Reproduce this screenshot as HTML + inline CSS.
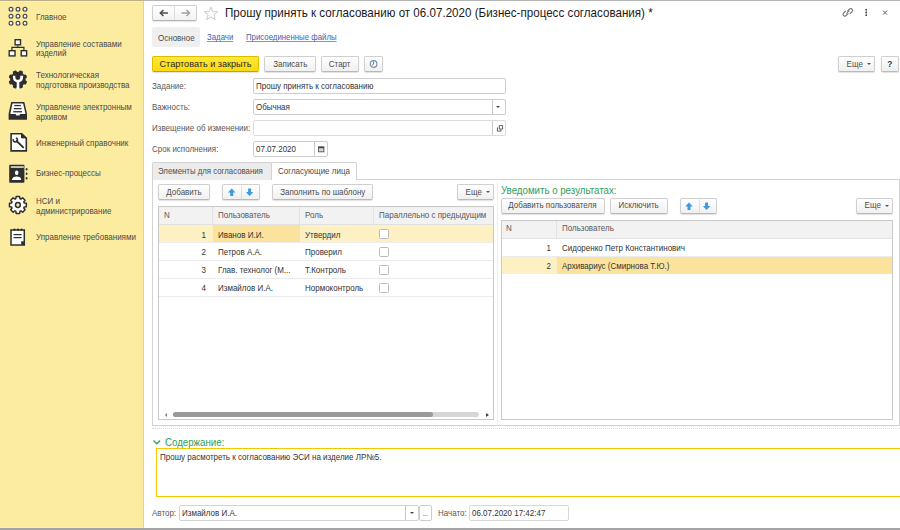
<!DOCTYPE html>
<html><head><meta charset="utf-8">
<style>
*{box-sizing:border-box;margin:0;padding:0}
html,body{width:900px;height:530px;overflow:hidden;background:#fff;font-family:"Liberation Sans",sans-serif;color:#4d4d4d}
.a{position:absolute}
.t{position:absolute;font-size:8.6px;line-height:10px;white-space:nowrap;transform:scaleX(.93);transform-origin:0 0}
#side{position:absolute;left:0;top:0;width:144px;height:530px;background:#fbeca0;border-right:1px solid #e6d47e}
#topline{position:absolute;left:0;top:0;width:900px;height:1px;background:#b4b4b4}
#botline{position:absolute;left:0;top:528px;width:900px;height:2px;background:#a4a3a6}
.st{color:#4a4a4a}
.btn{position:absolute;height:16px;border:1px solid #cfcfcf;border-bottom-color:#b9b9b9;border-radius:2px;background:linear-gradient(#ffffff,#f0f0f0);box-shadow:0 1px 1px rgba(0,0,0,0.12);font-size:8.6px;line-height:14px;text-align:center;color:#4d4d4d;white-space:nowrap}
.inp{position:absolute;height:16px;border:1px solid #cdcdcd;border-radius:2px;background:#fff;font-size:8.6px;line-height:14px;padding-left:2px;color:#333;white-space:nowrap}
.lbl{position:absolute;font-size:8.6px;line-height:10px;color:#595959;white-space:nowrap;transform:scaleX(.93);transform-origin:0 0}
.th{position:absolute;font-size:8.6px;line-height:10px;color:#595959;white-space:nowrap;transform:scaleX(.93);transform-origin:0 0}
.td{position:absolute;font-size:8.6px;line-height:10px;color:#333;white-space:nowrap;transform:scaleX(.93);transform-origin:0 0}
.tr{transform-origin:100% 0}
.sx{display:inline-block;transform:scaleX(.93)}
.green{position:absolute;font-size:10.6px;line-height:12px;color:#2c9e5c;white-space:nowrap;transform:scaleX(.915);transform-origin:0 0}
.link{position:absolute;font-size:8.6px;line-height:10px;color:#4563b0;text-decoration:underline;text-decoration-color:#7f97cf;text-underline-offset:1px;white-space:nowrap;transform:scaleX(.91);transform-origin:0 0}
</style></head><body>
<div id="side"></div>
<div id="topline"></div><div class="a" style="left:0;top:0;width:143px;height:1px;background:#bcae86"></div><div class="a" style="left:0;top:1px;width:143px;height:1px;background:#fdf1ae"></div>

<!-- sidebar icons -->
<svg class="a" style="left:0;top:0" width="143" height="260" viewBox="0 0 143 260">
 <g fill="#fff" stroke="#4a4a4a" stroke-width="1.2">
  <circle cx="11" cy="9.3" r="1.9"/><circle cx="18" cy="9.3" r="1.9"/><circle cx="25" cy="9.3" r="1.9"/>
  <circle cx="11" cy="16.3" r="1.9"/><circle cx="18" cy="16.3" r="1.9"/><circle cx="25" cy="16.3" r="1.9"/>
  <circle cx="11" cy="23.3" r="1.9"/><circle cx="18" cy="23.3" r="1.9"/><circle cx="25" cy="23.3" r="1.9"/>
 </g>
 <!-- structure -->
 <g fill="#fff" stroke="#2e2e2e" stroke-width="1.4">
  <rect x="15.1" y="39.7" width="5.4" height="5.1"/>
  <rect x="9.2" y="50.7" width="5.8" height="5.2"/>
  <rect x="21.2" y="50.7" width="5.4" height="5.2"/>
  <path d="M17.8 45.5V47.3M11.9 50V47.3H23.9V50" fill="none" stroke-width="1.2"/>
 </g>
 <!-- gear wrench -->
 <g transform="translate(17.9 79.5)" fill="#2e2e2e">
  <circle r="7.7"/>
  <g id="teeth" transform="rotate(22.5)">
   <rect x="-2" y="-9.3" width="4" height="4" rx="1.1"/>
   <rect x="-2" y="-9.3" width="4" height="4" rx="1.1" transform="rotate(45)"/>
   <rect x="-2" y="-9.3" width="4" height="4" rx="1.1" transform="rotate(90)"/>
   <rect x="-2" y="-9.3" width="4" height="4" rx="1.1" transform="rotate(135)"/>
   <rect x="-2" y="-9.3" width="4" height="4" rx="1.1" transform="rotate(180)"/>
   <rect x="-2" y="-9.3" width="4" height="4" rx="1.1" transform="rotate(225)"/>
   <rect x="-2" y="-9.3" width="4" height="4" rx="1.1" transform="rotate(270)"/>
   <rect x="-2" y="-9.3" width="4" height="4" rx="1.1" transform="rotate(315)"/>
  </g>
 </g>
 <path d="M12.9 75.8V77.2A5.1 5.1 0 0 0 16.7 82.13V89.2H19.3V82.13A5.1 5.1 0 0 0 23.1 77.2V75.8H20.3V77.4A2.5 2.5 0 0 1 15.3 77.4V75.8Z" fill="#fff"/>
 <!-- archive tray -->
 <path d="M11.2 102H24.3L27 113.8V119.7H8.6V113.8Z" fill="#2e2e2e"/>
 <path d="M12.5 103.4H23.1L25.5 113.9H10.3Z" fill="#fff"/>
 <rect x="14.3" y="104.9" width="6.6" height="1.3" fill="#2e2e2e"/>
 <rect x="13.8" y="108" width="7.8" height="1.3" fill="#2e2e2e"/>
 <rect x="13.2" y="111.1" width="8.8" height="1.3" fill="#2e2e2e"/>
 
 <rect x="15.9" y="113.6" width="3.9" height="1.8" fill="#fff"/>
 <!-- doc wrench -->
 <path d="M11.1 133.8H21.8L26.3 138.3V150.9H11.1Z" fill="#fff" stroke="#2e2e2e" stroke-width="1.6"/>
 <path d="M21.5 133.8V137.9H26.3Z" fill="#2e2e2e" stroke="#2e2e2e" stroke-width="1"/>
 <path d="M16.6 141L23.2 147.3" stroke="#2e2e2e" stroke-width="1.8" stroke-linecap="round"/>
 <path d="M13.4 139.1A2.1 2.1 0 1 0 16 137.9" fill="none" stroke="#2e2e2e" stroke-width="1.6"/>
 <!-- contact book -->
 <rect x="9.2" y="164.7" width="15.2" height="18" rx="0.8" fill="#2e2e2e"/>
 <rect x="10.8" y="166.2" width="13" height="1.7" fill="#d8d8d8"/>
 <ellipse cx="16.7" cy="172.7" rx="1.8" ry="2.3" fill="#fff"/>
 <path d="M11.9 180C12.3 177.4 14 176.6 16.7 176.6C19.4 176.6 21 177.4 21.3 180Z" fill="#fff"/>
 <ellipse cx="26.6" cy="169.3" rx="0.9" ry="1.3" fill="#2e2e2e"/>
 <ellipse cx="26.6" cy="173.7" rx="0.9" ry="1.3" fill="#2e2e2e"/>
 <ellipse cx="26.6" cy="178.2" rx="0.9" ry="1.3" fill="#2e2e2e"/>
 <!-- gear outline -->
 <g transform="translate(17.9 205)">
  <path fill="#fff" stroke="#2e2e2e" stroke-width="1.5" stroke-linejoin="round" d="M-2.08 -6.26L-1.71 -8.43L1.71 -8.43L2.08 -6.26L2.96 -5.90L4.75 -7.17L7.17 -4.75L5.90 -2.96L6.26 -2.08L8.43 -1.71L8.43 1.71L6.26 2.08L5.90 2.96L7.17 4.75L4.75 7.17L2.96 5.90L2.08 6.26L1.71 8.43L-1.71 8.43L-2.08 6.26L-2.96 5.90L-4.75 7.17L-7.17 4.75L-5.90 2.96L-6.26 2.08L-8.43 1.71L-8.43 -1.71L-6.26 -2.08L-5.90 -2.96L-7.17 -4.75L-4.75 -7.17L-2.96 -5.90Z"/>
  <circle r="2.4" fill="#fbeca0" stroke="#2e2e2e" stroke-width="1.5"/>
 </g>
 <!-- notepad -->
 <path d="M11 230.1H24.3V244.9H11Z" fill="#fff" stroke="#2e2e2e" stroke-width="1.5"/>
 <circle cx="14.4" cy="229.6" r="1.1" fill="#2e2e2e"/>
 <circle cx="18" cy="229.6" r="1.1" fill="#2e2e2e"/>
 <circle cx="21.6" cy="229.6" r="1.1" fill="#2e2e2e"/>
 <rect x="13.5" y="234" width="8.1" height="1.2" fill="#2e2e2e"/>
 <rect x="13.5" y="237" width="8.1" height="1.2" fill="#2e2e2e"/>
 <rect x="21.2" y="241.3" width="3.1" height="3.6" fill="#2e2e2e"/>
</svg>

<div class="t st" style="left:36px;top:12px">Главное</div>
<div class="t st" style="left:36px;top:40px;line-height:9px">Управление составами<br>изделий</div>
<div class="t st" style="left:36px;top:70px">Технологическая<br>подготовка производства</div>
<div class="t st" style="left:36px;top:101.7px">Управление электронным<br>архивом</div>
<div class="t st" style="left:36px;top:138px">Инженерный справочник</div>
<div class="t st" style="left:36px;top:168px">Бизнес-процессы</div>
<div class="t st" style="left:36px;top:196px">НСИ и<br>администрирование</div>
<div class="t st" style="left:36px;top:232px">Управление требованиями</div>

<!-- header -->
<div class="a" style="left:151.5px;top:5px;width:45.5px;height:15.5px;border:1px solid #cfcfcf;border-bottom-color:#b5b5b5;border-radius:2px;background:linear-gradient(#fff,#f2f2f2);box-shadow:0 1px 1px rgba(0,0,0,.1)"></div>
<div class="a" style="left:174px;top:6px;width:1px;height:14px;background:#dedede"></div>
<svg class="a" style="left:152px;top:5px" width="45" height="16">
 <path d="M8.2 8H16M11.4 5L8.4 8L11.4 11" fill="none" stroke="#4f4f4f" stroke-width="1.6"/>
 <path d="M29.5 8H37.6M34.5 5L37.5 8L34.5 11" fill="none" stroke="#a0a0a0" stroke-width="1.5"/>
</svg>
<svg class="a" style="left:203px;top:6px" width="16" height="15" viewBox="0 0 16 15">
 <path d="M8 1L9.8 5.6L14.6 5.8L10.9 8.8L12.2 13.6L8 10.8L3.8 13.6L5.1 8.8L1.4 5.8L6.2 5.6Z" fill="none" stroke="#c4c4c4" stroke-width="0.9"/>
</svg>
<div class="a" style="left:224.5px;top:5.6px;font-size:12.2px;line-height:14px;color:#1a1a1a;white-space:nowrap;transform:scaleX(.952);transform-origin:0 0">Прошу принять к согласованию от 06.07.2020 (Бизнес-процесс согласования) *</div>
<svg class="a" style="left:840px;top:5px" width="55" height="15">
 <g fill="none" stroke="#6a6a6a" stroke-width="1.05">
  <path d="M7.3 6.3L9.5 4.1A1.75 1.75 0 0 1 12 6.6L9.8 8.8"/>
  <path d="M8.3 8.4L6.1 10.6A1.75 1.75 0 0 1 3.6 8.1L5.8 5.9"/>
  <path d="M6.5 8.5L9.3 5.7"/>
 </g>
 <path d="M26.2 4.2V10.7" stroke="#888" stroke-width="0.6"/>
 <g fill="#444"><circle cx="26.2" cy="4.7" r="0.85"/><circle cx="26.2" cy="7.4" r="0.85"/><circle cx="26.2" cy="10.2" r="0.85"/></g>
 <path d="M43.1 5.6L47.1 9.7M47.1 5.6L43.1 9.7" stroke="#555" stroke-width="0.9"/>
</svg>

<div class="a" style="left:152px;top:27px;width:48px;height:20px;background:#efefef;border-radius:2px"></div>
<div class="lbl" style="left:158px;top:32.7px;color:#4d4d4d">Основное</div>
<div class="link" style="left:206.5px;top:32.4px">Задачи</div>
<div class="link" style="left:245.6px;top:32.4px">Присоединенные файлы</div>

<!-- command bar -->
<div class="btn" style="left:152px;top:56px;width:107px;background:linear-gradient(#ffe83a,#fbd90c);border-color:#dcbc00;border-bottom-color:#c4a400;color:#2a2a2a;font-size:9.1px"><span style="display:inline-block;transform:scaleX(1)">Стартовать и закрыть</span></div>
<div class="btn" style="left:264px;top:56px;width:52px"><span class="sx">Записать</span></div>
<div class="btn" style="left:321px;top:56px;width:38px"><span class="sx">Старт</span></div>
<div class="btn" style="left:364px;top:56px;width:19px"></div>
<svg class="a" style="left:368px;top:58px" width="11" height="11">
 <circle cx="5.6" cy="6" r="3.3" fill="#fff" stroke="#6a93b0" stroke-width="1.2"/>
 <path d="M5.6 3.6V6.2" fill="none" stroke="#444" stroke-width="0.8"/>
 <path d="M5.6 6.2L3.9 7.3" fill="none" stroke="#d04040" stroke-width="0.9"/>
</svg>
<div class="btn" style="left:838px;top:56px;width:37px;text-align:left;padding-left:7px"><span class="sx">Еще</span><span style="position:absolute;left:28px;top:6px;border-left:2px solid transparent;border-right:2px solid transparent;border-top:2px solid #555"></span></div>
<div class="btn" style="left:881px;top:56px;width:18px;font-weight:bold;font-size:9px;color:#333"><span class="sx">?</span></div>

<!-- fields -->
<div class="lbl" style="left:152px;top:81px">Задание:</div>
<div class="inp" style="left:253px;top:78px;width:253px"><span class="sx" style="transform-origin:0 0">Прошу принять к согласованию</span></div>
<div class="lbl" style="left:152px;top:102px">Важность:</div>
<div class="inp" style="left:253px;top:99px;width:253px"><span class="sx" style="transform-origin:0 0">Обычная</span><span class="a" style="left:238px;top:0;width:1px;height:14px;background:#c8c8c8"></span><span class="a" style="left:242.3px;top:6px;border-left:2px solid transparent;border-right:2px solid transparent;border-top:2px solid #444"></span></div>
<div class="lbl" style="left:152px;top:123px">Извещение об изменении:</div>
<div class="inp" style="left:253px;top:120px;width:253px;border-color:#dcdcdc"><span class="a" style="left:238px;top:0;width:1px;height:14px;background:#c8c8c8"></span>
<svg class="a" style="left:242px;top:2px" width="9" height="9"><path d="M1.4 4.4V8.1H5V6.4M3.3 2.6H6.6V6H3.3Z" fill="none" stroke="#555" stroke-width="0.95"/></svg></div>
<div class="lbl" style="left:152px;top:144px">Срок исполнения:</div>
<div class="inp" style="left:253px;top:141px;width:75px"><span class="sx" style="transform-origin:0 0">07.07.2020</span><span class="a" style="left:60px;top:0;width:1px;height:14px;background:#c8c8c8"></span>
<svg class="a" style="left:64px;top:4px" width="8" height="8"><rect x="0.5" y="1" width="5.4" height="4.8" fill="#d4d4d4" stroke="#555" stroke-width="0.9"/><rect x="0.3" y="0.6" width="5.8" height="1.6" fill="#444"/></svg></div>

<!-- tabs + panel -->
<div class="a" style="left:152px;top:179px;width:748px;height:247px;border:1px solid #d3d3d3;border-right-color:#d3d3d3"></div>
<div class="a" style="left:152px;top:162px;width:120px;height:18px;background:#ececec;border:1px solid #d3d3d3;border-bottom:none;border-radius:2px 2px 0 0"></div>
<div class="lbl" style="left:158.4px;top:166px;color:#4d4d4d;transform:scaleX(.91)">Элементы для согласования</div>
<div class="a" style="left:271px;top:162px;width:86px;height:18px;background:#fff;border:1px solid #d3d3d3;border-bottom:none;border-radius:2px 2px 0 0"></div>
<div class="lbl" style="left:277.5px;top:166px;color:#4d4d4d">Согласующие лица</div>

<!-- left cmd -->
<div class="btn" style="left:158px;top:184px;height:16.3px;width:52px"><span class="sx">Добавить</span></div>
<div class="btn" style="left:222px;top:184px;height:16.3px;width:38px"></div>
<div class="a" style="left:241px;top:186px;width:1px;height:13px;background:#dedede"></div>
<svg class="a" style="left:226px;top:187px" width="30" height="12">
 <path d="M5.7 1.5L9.4 5.4H7.2V9H4.2V5.4H2Z" fill="#3a9be0"/>
 <path d="M23.6 9L27.3 5.1H25.1V1.5H22.1V5.1H19.9Z" fill="#3a9be0"/>
</svg>
<div class="btn" style="left:272px;top:184px;height:16.3px;width:101px"><span class="sx">Заполнить по шаблону</span></div>
<div class="btn" style="left:457px;top:184px;height:16.3px;width:37px;text-align:left;padding-left:7.3px"><span class="sx">Еще</span><span style="position:absolute;left:28px;top:6px;border-left:2px solid transparent;border-right:2px solid transparent;border-top:2px solid #555"></span></div>

<!-- left table -->
<div class="a" style="left:158px;top:206px;width:336px;height:214px;border:1px solid #c9c9c9"></div>
<div class="a" style="left:159px;top:207px;width:334px;height:18px;background:#f2f2f2;border-bottom:1px solid #e2e2e2"></div>
<div class="a" style="left:212px;top:207px;width:1px;height:18px;background:#e2e2e2"></div>
<div class="a" style="left:299px;top:207px;width:1px;height:18px;background:#e2e2e2"></div>
<div class="a" style="left:373px;top:207px;width:1px;height:18px;background:#e2e2e2"></div>
<div class="th" style="left:164px;top:209.8px">N</div>
<div class="th" style="left:217.5px;top:209.8px">Пользователь</div>
<div class="th" style="left:305px;top:209.8px">Роль</div>
<div class="th" style="left:378.5px;top:209.8px">Параллельно с предыдущим</div>

<div class="a" style="left:159px;top:225px;width:334px;height:18px;background:#fdf0c2"></div>
<div class="a" style="left:213px;top:225px;width:87px;height:18px;background:#fbe39d"></div>
<div class="a" style="left:159px;top:242px;width:334px;height:1px;background:#ebebeb"></div>
<div class="a" style="left:159px;top:260px;width:334px;height:1px;background:#ebebeb"></div>
<div class="a" style="left:159px;top:278px;width:334px;height:1px;background:#ebebeb"></div>
<div class="a" style="left:159px;top:296px;width:334px;height:1px;background:#ebebeb"></div>

<div class="td" style="left:158.2px;width:48px;text-align:right;transform-origin:100% 0;top:229.7px">1</div>
<div class="td" style="left:217.5px;top:229.7px">Иванов И.И.</div>
<div class="td" style="left:305px;top:229.7px">Утвердил</div>
<div class="td" style="left:158.2px;width:48px;text-align:right;transform-origin:100% 0;top:247.3px">2</div>
<div class="td" style="left:217.5px;top:247.3px">Петров А.А.</div>
<div class="td" style="left:305px;top:247.3px">Проверил</div>
<div class="td" style="left:158.2px;width:48px;text-align:right;transform-origin:100% 0;top:265.2px">3</div>
<div class="td" style="left:217.5px;top:265.2px">Глав. технолог (М...</div>
<div class="td" style="left:305px;top:265.2px">Т.Контроль</div>
<div class="td" style="left:158.2px;width:48px;text-align:right;transform-origin:100% 0;top:283.2px">4</div>
<div class="td" style="left:217.5px;top:283.2px">Измайлов И.А.</div>
<div class="td" style="left:305px;top:283.2px">Нормоконтроль</div>
<div class="a" style="left:379px;top:229.1px;width:9.6px;height:9.6px;border:1px solid #bcbcbc;border-radius:1.5px;background:#fff"></div>
<div class="a" style="left:379px;top:247.1px;width:9.6px;height:9.6px;border:1px solid #bcbcbc;border-radius:1.5px;background:#fff"></div>
<div class="a" style="left:379px;top:265.1px;width:9.6px;height:9.6px;border:1px solid #bcbcbc;border-radius:1.5px;background:#fff"></div>
<div class="a" style="left:379px;top:283.1px;width:9.6px;height:9.6px;border:1px solid #bcbcbc;border-radius:1.5px;background:#fff"></div>

<!-- scrollbar -->
<div class="a" style="left:173px;top:412px;width:306px;height:5px;background:#d6d6d6;border-radius:3px"></div>
<div class="a" style="left:173px;top:412px;width:260px;height:5px;background:#9a9a9a;border-radius:3px"></div>
<div class="a" style="left:165px;top:413px;border-top:2px solid transparent;border-bottom:2px solid transparent;border-right:2.5px solid #777"></div>
<div class="a" style="left:486px;top:412.5px;border-top:2.5px solid transparent;border-bottom:2.5px solid transparent;border-left:3px solid #444"></div>

<!-- dotted vertical -->
<div class="a" style="left:497px;top:181px;width:1px;height:244px;background:#efefef"></div>

<!-- right group -->
<div class="green" style="left:500.5px;top:184px">Уведомить о результатах:</div>
<div class="btn" style="left:501px;top:198px;width:103.5px;height:15.8px;line-height:13.8px"><span class="sx">Добавить пользователя</span></div>
<div class="btn" style="left:610px;top:198px;width:58px;height:15.8px;line-height:13.8px"><span class="sx">Исключить</span></div>
<div class="btn" style="left:680px;top:198px;width:37px;height:15.8px"></div>
<div class="a" style="left:698.5px;top:199px;width:1px;height:14px;background:#dedede"></div>
<svg class="a" style="left:683px;top:201px" width="30" height="12">
 <path d="M6 1.5L9.7 5.4H7.5V9H4.5V5.4H2.3Z" fill="#3a9be0"/>
 <path d="M23.6 9L27.3 5.1H25.1V1.5H22.1V5.1H19.9Z" fill="#3a9be0"/>
</svg>
<div class="btn" style="left:855.5px;top:198px;width:37px;height:15.8px;line-height:13.8px;text-align:left;padding-left:7.3px"><span class="sx">Еще</span><span style="position:absolute;left:28px;top:6px;border-left:2px solid transparent;border-right:2px solid transparent;border-top:2px solid #555"></span></div>

<div class="a" style="left:501px;top:220px;width:392px;height:200px;border:1px solid #c9c9c9"></div>
<div class="a" style="left:502px;top:221px;width:390px;height:18px;background:#f2f2f2;border-bottom:1px solid #e2e2e2"></div>
<div class="a" style="left:556px;top:221px;width:1px;height:18px;background:#e2e2e2"></div>
<div class="th" style="left:506px;top:223.3px">N</div>
<div class="th" style="left:561.5px;top:223.3px">Пользователь</div>
<div class="a" style="left:502px;top:256px;width:390px;height:1px;background:#ebebeb"></div>
<div class="a" style="left:502px;top:257px;width:390px;height:16.5px;background:#fdf0c2"></div>
<div class="a" style="left:557px;top:257px;width:335px;height:16.5px;background:#fbe39d"></div>
<div class="td" style="left:502px;width:49px;text-align:right;transform-origin:100% 0;top:242.7px">1</div>
<div class="td" style="left:561.5px;top:242.7px">Сидоренко Петр Константинович</div>
<div class="td" style="left:502px;width:49px;text-align:right;transform-origin:100% 0;top:260.5px">2</div>
<div class="td" style="left:561.5px;top:260.5px">Архивариус (Смирнова Т.Ю.)</div>

<!-- dotted horizontal -->
<div class="a" style="left:152px;top:428px;width:748px;height:1px;border-top:1px dotted #dadada"></div>

<!-- content -->
<svg class="a" style="left:152px;top:438px" width="10" height="9"><path d="M1.5 2.5L4.8 5.8L8.1 2.5" fill="none" stroke="#3aa05a" stroke-width="1.3"/></svg>
<div class="green" style="left:165px;top:436px">Содержание:</div>
<div class="a" style="left:156px;top:448px;width:760px;height:49px;border:1.7px solid #f7c700"></div>
<div class="td" style="left:160px;top:451.9px">Прошу расмотреть к согласованию ЭСИ на изделие ЛР№5.</div>

<!-- footer -->
<div class="lbl" style="left:152px;top:508.3px">Автор:</div>
<div class="inp" style="left:178.5px;top:505px;width:240px;height:15.5px;line-height:15.2px;border-color:#d3d3d3"><span class="sx" style="transform-origin:0 0">Измайлов И.А.</span><span class="a" style="left:225.5px;top:0;width:1px;height:13.5px;background:#c8c8c8"></span><span class="a" style="left:230px;top:6px;border-left:2px solid transparent;border-right:2px solid transparent;border-top:2px solid #444"></span></div>
<div class="btn" style="left:419px;top:505px;width:12.5px;height:15.5px;box-shadow:none;background:#fff;border-color:#cdcdcd"><span class="a" style="left:2.5px;top:4px;font-size:8px;line-height:8px;color:#666;letter-spacing:-0.6px">...</span></div>
<div class="lbl" style="left:438px;top:508.3px">Начато:</div>
<div class="inp" style="left:469px;top:505px;width:100px;height:15.5px;line-height:15.2px;border-color:#d8d8d8"><span class="sx" style="transform-origin:0 0">06.07.2020 17:42:47</span></div>

<div class="a" style="left:0;top:527px;width:143px;height:1px;background:#fdf2a8"></div><div id="botline"></div>

</body></html>
